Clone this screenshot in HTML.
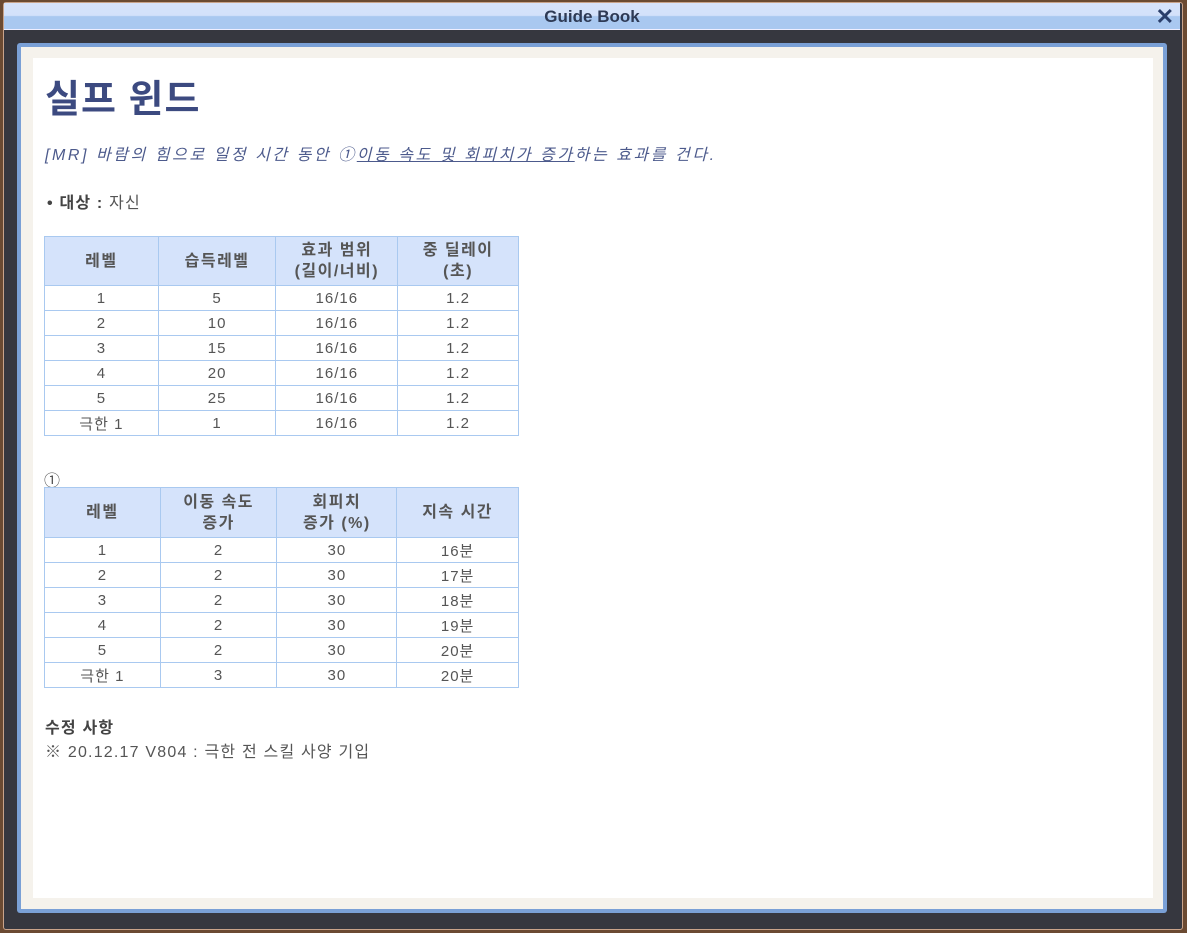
<!DOCTYPE html>
<html><head><meta charset="utf-8"><style>
*{margin:0;padding:0;box-sizing:border-box}
body{width:1187px;height:933px;background:#6b4a32;position:relative;overflow:hidden;font-family:"Liberation Sans","Noto Sans CJK KR","NanumGothic",sans-serif}
.frame{position:absolute;left:3px;top:2px;width:1180px;height:928px;background:#36373f;border:1px solid #c9a38a;border-radius:3px}
.bar{position:absolute;left:4px;top:3px;width:1176px;height:27px;background:linear-gradient(#d6e3fb 0,#d3e1fa 48%,#a9c8f0 52%,#a9c8f0 100%);border-bottom:1px solid #eef;text-align:center;font-weight:bold;font-size:17px;line-height:27px;color:#2e3a55}
.x{position:absolute;right:6px;top:0;font-size:22px;color:#2b3f6b;font-weight:bold}
.blue{position:absolute;left:17px;top:43px;width:1150px;height:870px;background:#7aa0d6;border-radius:3px}
.cream{position:absolute;left:21px;top:47px;width:1142px;height:862px;background:#f5f2ec}
.white{position:absolute;left:33px;top:58px;width:1120px;height:840px;background:#fff}
.t{position:absolute;color:#555;font-size:16px;letter-spacing:1.2px;white-space:nowrap}
h1{position:absolute;left:45px;top:68px;font-size:38px;color:#3c4a80;font-weight:bold;letter-spacing:1px}
table{position:absolute;left:44px;border-collapse:collapse;font-size:15px;color:#555;text-align:center;letter-spacing:1px}
td,th{border:1px solid #a9c9f0;padding:0}
th{background:#d5e3fb;color:#555;font-weight:bold;line-height:21px;font-size:16px;letter-spacing:1.5px}
td{height:25px}
</style></head><body>
<div class="frame"></div>
<div class="bar">Guide Book<span class="x">✕</span></div>
<div class="blue"></div><div class="cream"></div><div class="white"></div>
<h1>실프 윈드</h1>
<div class="t" style="left:45px;top:141px;font-style:italic;color:#4c5a8c;letter-spacing:2.55px">[MR] 바람의 힘으로 일정 시간 동안 ①<u>이동 속도 및 회피치가 증가</u>하는 효과를 건다.</div>
<div class="t" style="left:47px;top:189px"><b style="color:#444">• 대상 :</b> 자신</div>
<table style="top:236px;width:475px">
<tr style="height:49px"><th style="width:114px">레벨</th><th style="width:118px">습득레벨</th><th style="width:122px">효과 범위<br>(길이/너비)</th><th style="width:121px">중 딜레이<br>(초)</th></tr>
<tr><td>1</td><td>5</td><td>16/16</td><td>1.2</td></tr>
<tr><td>2</td><td>10</td><td>16/16</td><td>1.2</td></tr>
<tr><td>3</td><td>15</td><td>16/16</td><td>1.2</td></tr>
<tr><td>4</td><td>20</td><td>16/16</td><td>1.2</td></tr>
<tr><td>5</td><td>25</td><td>16/16</td><td>1.2</td></tr>
<tr><td>극한 1</td><td>1</td><td>16/16</td><td>1.2</td></tr>
</table>
<div class="t" style="left:44px;top:467px">①</div>
<table style="top:487px;width:475px">
<tr style="height:50px"><th style="width:116px">레벨</th><th style="width:117px">이동 속도<br>증가</th><th style="width:120px">회피치<br>증가 (%)</th><th style="width:122px">지속 시간</th></tr>
<tr><td>1</td><td>2</td><td>30</td><td>16분</td></tr>
<tr><td>2</td><td>2</td><td>30</td><td>17분</td></tr>
<tr><td>3</td><td>2</td><td>30</td><td>18분</td></tr>
<tr><td>4</td><td>2</td><td>30</td><td>19분</td></tr>
<tr><td>5</td><td>2</td><td>30</td><td>20분</td></tr>
<tr><td>극한 1</td><td>3</td><td>30</td><td>20분</td></tr>
</table>
<div class="t" style="left:45px;top:714px;font-weight:bold;color:#444">수정 사항</div>
<div class="t" style="left:45px;top:738px">※ 20.12.17 V804 : 극한 전 스킬 사양 기입</div>
</body></html>
